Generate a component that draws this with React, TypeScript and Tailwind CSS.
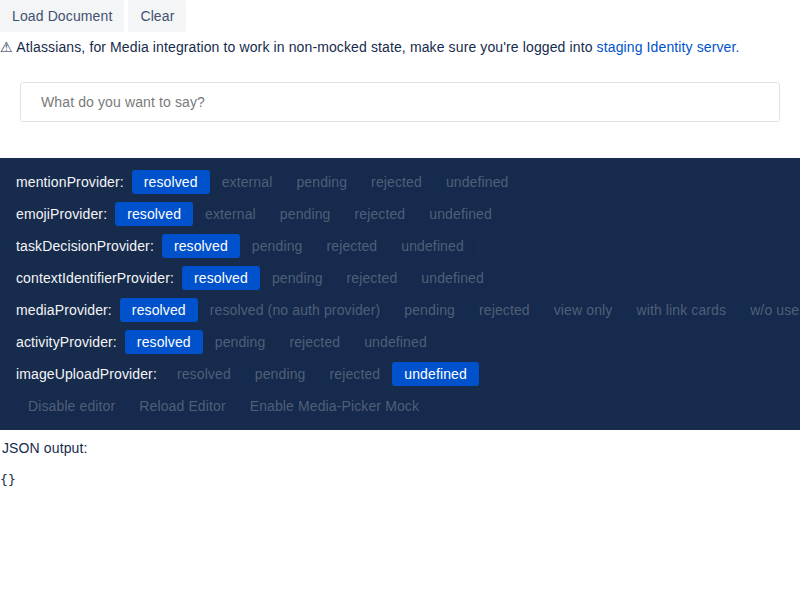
import React from "react";

const font = { fontFamily: '"Liberation Sans", Arial, sans-serif', letterSpacing: "0.12px" };

type Row = { label: string; options: string[]; active: number };

const rows: Row[] = [
  { label: "mentionProvider:", options: ["resolved", "external", "pending", "rejected", "undefined"], active: 0 },
  { label: "emojiProvider:", options: ["resolved", "external", "pending", "rejected", "undefined"], active: 0 },
  { label: "taskDecisionProvider:", options: ["resolved", "pending", "rejected", "undefined"], active: 0 },
  { label: "contextIdentifierProvider:", options: ["resolved", "pending", "rejected", "undefined"], active: 0 },
  {
    label: "mediaProvider:",
    options: ["resolved", "resolved (no auth provider)", "pending", "rejected", "view only", "with link cards", "w/o userAuthProvider"],
    active: 0,
  },
  { label: "activityProvider:", options: ["resolved", "pending", "rejected", "undefined"], active: 0 },
  { label: "imageUploadProvider:", options: ["resolved", "pending", "rejected", "undefined"], active: 3 },
];

function Opt({ text, active }: { text: string; active: boolean }) {
  return (
    <span
      className={
        active
          ? "shrink-0 h-6 px-3 flex items-center rounded-[3px] bg-[#0052CC] text-white text-[14px] whitespace-nowrap"
          : "shrink-0 h-6 px-3 flex items-center rounded-[3px] bg-[rgba(9,30,66,0.05)] text-[#505F79] text-[14px] whitespace-nowrap"
      }
    >
      {text}
    </span>
  );
}

export default function App() {
  return (
    <div className="w-[800px] h-[600px] bg-white overflow-hidden text-[#172B4D]" style={font}>
      <div className="flex gap-1">
        <button className="h-8 px-3 rounded-[3px] bg-[#F4F5F7] text-[#42526E] text-[14px]">Load Document</button>
        <button className="h-8 px-3 rounded-[3px] bg-[#F4F5F7] text-[#42526E] text-[14px]">Clear</button>
      </div>
      <p className="mt-[5px] text-[14px] leading-5 whitespace-nowrap">
        ⚠ Atlassians, for Media integration to work in non-mocked state, make sure you're logged into{" "}
        <span className="text-[#0052CC]">staging Identity server.</span>
      </p>
      <div className="px-5 mt-[25px]">
        <div className="h-10 border border-[#DFE1E6] rounded-[3px] flex items-center px-5 text-[14px] text-[#7A7A7A]">
          What do you want to say?
        </div>
      </div>
      <div className="mt-9 bg-[#172B4D] px-4 pt-2 pb-2 overflow-hidden">
        {rows.map((r) => (
          <div key={r.label} className="h-8 flex items-center whitespace-nowrap">
            <span className="text-[14px] text-[#F4F5F7] mr-2 shrink-0">{r.label}</span>
            {r.options.map((o, i) => (
              <Opt key={o} text={o} active={i === r.active} />
            ))}
          </div>
        ))}
        <div className="h-8 flex items-center">
          <Opt text="Disable editor" active={false} />
          <Opt text="Reload Editor" active={false} />
          <Opt text="Enable Media-Picker Mock" active={false} />
        </div>
      </div>
      <div className="mt-2 pl-[2px] text-[14px] leading-5">JSON output:</div>
      <pre className="mt-3 text-[13px] leading-5" style={{ fontFamily: '"DejaVu Sans Mono", monospace' }}>
        {"{}"}
      </pre>
    </div>
  );
}
